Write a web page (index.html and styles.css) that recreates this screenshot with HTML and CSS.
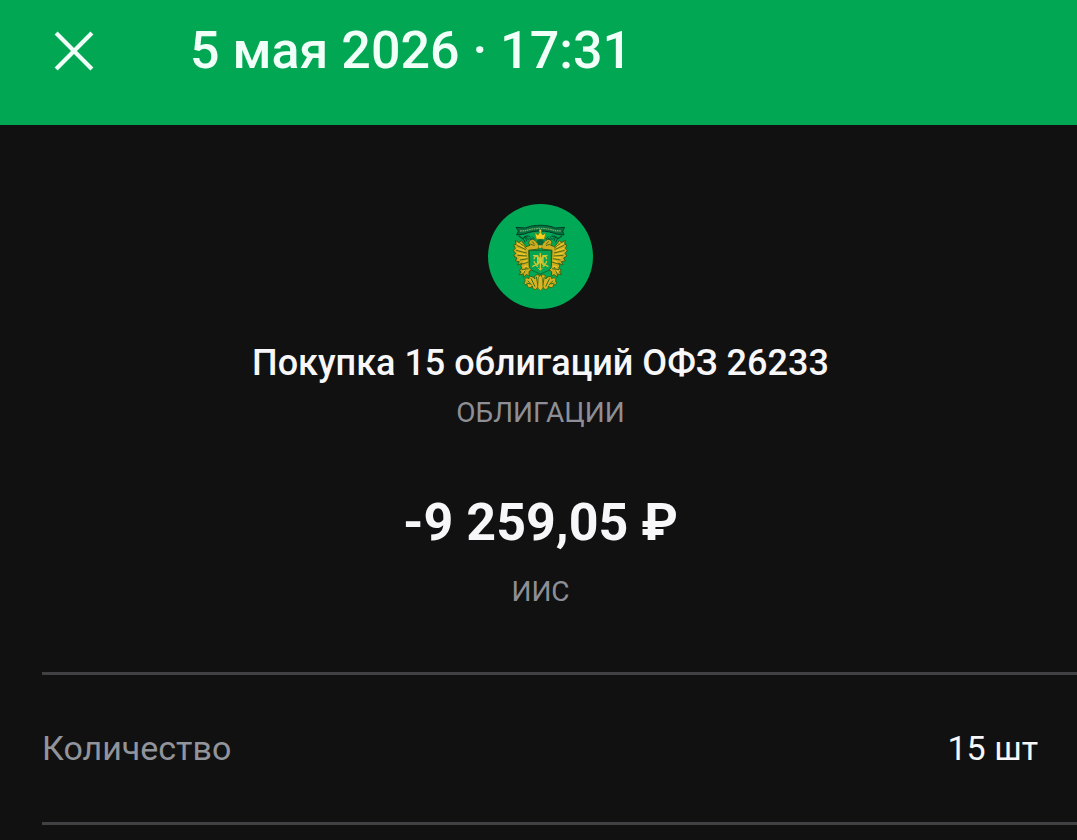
FILE: index.html
```html
<!DOCTYPE html>
<html lang="ru">
<head>
    <meta charset="UTF-8">
    <meta name="viewport" content="width=device-width, initial-scale=1">
    <title>Покупка облигаций</title>
    <link rel="stylesheet" href="styles.css">
</head>
<body>
<header class="header">
    <button class="close" type="button" aria-label="Закрыть">
        <svg viewBox="0 0 38 38" aria-hidden="true"><path d="M2 2L36 36M36 2L2 36"/></svg>
    </button>
    <h1 class="date">5 мая 2026 · 17:31</h1>
</header>

<main>
    <section class="summary">
        <svg class="logo" viewBox="24 24 315 315" aria-hidden="true">
            <circle cx="181.5" cy="181.5" r="157.5" fill="#00a955"/>
            <!-- wings, one side mirrored -->
            <defs>
                <g id="wing">
                    <path fill="#cfac20" stroke="#3f6212" stroke-width="3" d="M167 136C160 126 147 130 146 141L150 148L138 152L130 142L124 133L118 140L106 133L108 145L101 147L106 157L100 164L107 172L101 180L111 186L106 195L118 197L112 207L127 202L122 210L126 217L118 222L123 228L117 236L130 234L130 244L139 236L148 239L147 227L156 221L148 208L146 163L176 159L178 146Z"/>
                    <path class="lines" stroke="#4a6d14" d="M110 148L138 161M108 163L140 171M112 178L141 180M120 192L143 188M128 204L146 198M125 221L146 218M131 233L139 213M121 143L140 157M151 144L164 149M156 136L164 145"/>
                    <path class="lines" stroke="#f3ce2c" d="M111 142L133 154M109 157L134 165M111 171L136 176M118 186L140 184M131 198L142 194M130 213L143 210M127 228L136 222"/>
                    <path fill="#d9b323" stroke="#3f6412" stroke-width="3" d="M178 237C167 233 162 241 165 249C158 239 146 239 147 248C139 242 131 248 136 256C129 259 133 268 142 266C140 275 151 278 157 270C157 281 169 285 173 273L180 281Z"/>
                    <path class="lines" stroke="#32701a" d="M143 254L156 268M153 247L165 272M169 242L174 271M139 261L151 264"/>
                    <path class="lines" stroke="#064f32" d="M145 117C137 121 139 132 147 129C155 125 149 118 143 122M157 122L164 130M134 121L140 135M128 126L136 140M150 131L158 127"/>
                </g>
            </defs>
            <use href="#wing"/>
            <use href="#wing" transform="matrix(-1 0 0 1 362 0)"/>
            <!-- ribbon -->
            <path fill="#05713f" stroke="#043c29" stroke-width="3" d="M108 94L136 96C160 85 202 85 226 96L254 94L248 105L252 117L228 114C201 102 161 102 134 114L110 117L115 105Z"/>
            <path fill="none" stroke="#7fae68" stroke-width="4" stroke-dasharray="5 2" d="M120 105L137 104C161 95 201 95 225 104L242 105"/>
            <path fill="none" stroke="#064c2d" stroke-width="4" d="M116 119L128 128L140 119M246 119L234 128L222 119"/>
            <!-- crown -->
            <path fill="#f4ce20" stroke="#66720d" stroke-width="2" d="M169 130L164 110L174 117L181 105L188 117L198 110L193 130Z"/>
            <path fill="#ffe23d" d="M178 101H184V107H178Z"/>
            <path fill="#0b6b37" d="M170 134Q181 126 192 134L188 147L181 155L174 147Z"/>
            <path fill="#d9b728" d="M175 148H187L184 156H178Z"/>
            <!-- shield -->
            <path fill="#05a553" stroke="#14662e" stroke-width="3" d="M148 163H214V211C214 223 197 226 181 235C165 226 148 223 148 211Z"/>
            <path fill="none" stroke="#d1c531" stroke-width="4" d="M181 171V222M159 179H173V207M203 179H189V207M162 190C164 176 177 178 178 194C177 209 164 207 162 195M200 190C198 176 185 178 184 194C185 209 198 207 200 195M157 212L166 207L174 212M205 212L196 207L188 212"/>
            <path fill="none" stroke="#e2b91d" stroke-width="3" d="M175 216L181 223L187 216"/>
            <path fill="#dcb525" stroke="#426b13" stroke-width="2" d="M181 237L187 245L189 276L181 284L173 276L175 245Z"/>
        </svg>
        <h2 class="name">Покупка 15 облигаций ОФЗ 26233</h2>
        <p class="note">ОБЛИГАЦИИ</p>
        <p class="amount">-9 259,05 ₽</p>
        <p class="note">ИИС</p>
    </section>

    <dl class="details">
        <div class="row">
            <dt>Количество</dt>
            <dd>15 шт</dd>
        </div>
    </dl>
</main>
</body>
</html>
```
FILE: styles.css
```css
* {
    margin: 0;
    padding: 0;
    box-sizing: border-box;
}

body {
    background: #111;
    color: #f7f7f9;
    font-family: Roboto, "Liberation Sans", sans-serif;
}

.header {
    display: flex;
    align-items: center;
    gap: 86px;
    padding: 20px 44px 43px;
    background: #02a753;
    color: #f0fff7;
}

.close {
    width: 60px;
    height: 60px;
    padding: 10px;
    border: 0;
    background: none;
    color: inherit;
    cursor: pointer;
}

.close svg {
    display: block;
    width: 100%;
    fill: none;
    stroke: currentColor;
    stroke-width: 4;
}

.date {
    font-size: 52px;
    font-weight: 500;
    line-height: 62px;
}

.summary {
    display: flex;
    flex-direction: column;
    align-items: center;
    padding: 79px 16px 56px 20px;
    text-align: center;
}

.logo {
    width: 105px;
    height: 105px;
    margin-bottom: 28px;
}

.logo .lines {
    fill: none;
    stroke-width: 3;
}

.name {
    font-size: 36px;
    font-weight: 500;
    line-height: 52px;
}

.note {
    color: #8e8f96;
    font-size: 28px;
    line-height: 48px;
}

.amount {
    margin: 54px 0 13px;
    font-size: 52px;
    font-weight: 700;
    line-height: 64px;
}

.details {
    margin-left: 42px;
    border-bottom: 3px solid #414143;
}

.row {
    display: flex;
    justify-content: space-between;
    padding: 48px 39px 48px 0;
    border-top: 3px solid #414143;
    font-size: 34px;
    line-height: 51px;
}

.row dt {
    color: #92949b;
}
```
